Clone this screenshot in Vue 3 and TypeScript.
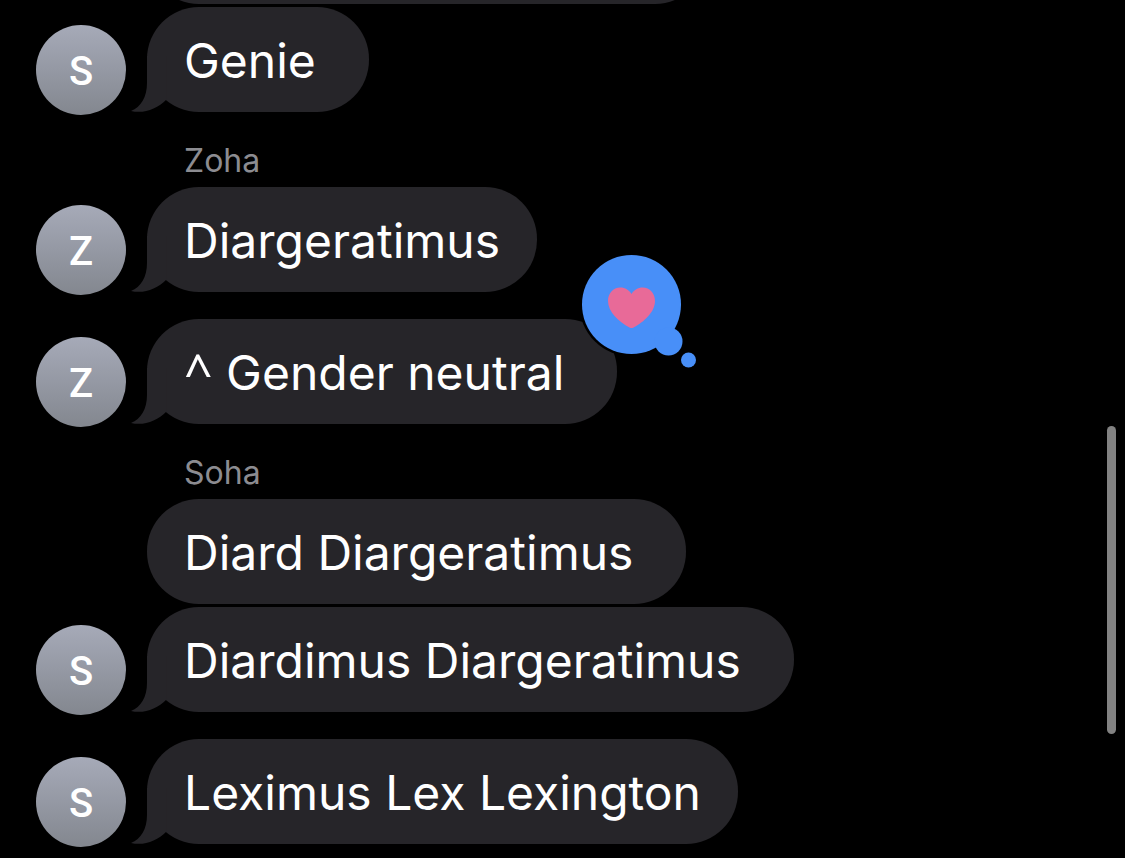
<script setup lang="ts">
interface Message {
  id: number
  text: string
  marker?: string
  initial?: string
  sender?: string
  stacked?: boolean
  roomy?: boolean
  loved?: boolean
}

const messages: Message[] = [
  { id: 1, text: 'Genie', initial: 'S', stacked: true, roomy: true },
  { id: 2, text: 'Diargeratimus', initial: 'Z', sender: 'Zoha' },
  { id: 3, marker: '^', text: ' Gender neutral', initial: 'Z', roomy: true, loved: true },
  { id: 4, text: 'Diard Diargeratimus', sender: 'Soha', roomy: true },
  { id: 5, text: 'Diardimus Diargeratimus', initial: 'S', stacked: true, roomy: true },
  { id: 6, text: 'Leximus Lex Lexington', initial: 'S' },
]
</script>

<template>
  <main class="conversation">
    <div class="earlier" aria-hidden="true"></div>
    <section
      v-for="m in messages"
      :key="m.id"
      class="message"
      :class="{ stacked: m.stacked, named: m.sender }"
    >
      <h2 v-if="m.sender" class="sender">{{ m.sender }}</h2>
      <div class="row">
        <div class="gutter">
          <span v-if="m.initial" class="avatar">{{ m.initial }}</span>
        </div>
        <div class="bubble" :class="{ roomy: m.roomy }">
          <svg v-if="m.initial" class="tail" viewBox="0 0 36 56" aria-hidden="true">
            <path d="M16 0V27C16 41 10 51 0 55C13 58 26 53 35.500 43.500V0Z" />
          </svg>
          <p class="text"><span v-if="m.marker" class="marker">{{ m.marker }}</span>{{ m.text }}</p>
          <svg v-if="m.loved" class="reaction" viewBox="0 0 120 118" role="img" aria-label="Loved">
            <circle class="ring" cx="52.5" cy="52.5" r="52" />
            <g class="cloud">
              <circle cx="52.5" cy="52.5" r="49.5" />
              <circle cx="89.5" cy="89.5" r="14" />
              <circle cx="109.5" cy="108" r="7.5" />
            </g>
            <path
              class="heart"
              d="M52.500 42C50 38 46 35.500 41.500 35.500C34 35.500 29 41.500 29 49C29 60 40 70 50.500 75.500Q52.500 76.700 54.500 75.500C65 70 76 60 76 49C76 41.500 71 35.500 63.500 35.500C59 35.500 55 38 52.500 42Z"
            />
          </svg>
        </div>
      </div>
    </section>
    <div class="scroll-thumb" aria-hidden="true"></div>
  </main>
</template>

<style>
html,
body {
  background: #000;
}
</style>

<style scoped>
.conversation {
  position: relative;
  box-sizing: border-box;
  height: 100vh;
  padding: 0 36px 14px;
  overflow: hidden;
  display: flex;
  flex-direction: column;
  justify-content: flex-end;
  background: #000;
  color: #fff;
  font-family: Inter, "Liberation Sans", sans-serif;
}

.earlier {
  flex: none;
  width: 560px;
  height: 105px;
  margin-left: 111px;
  border-radius: 52px;
  background: #262529;
}

.message {
  flex: none;
  margin-top: 27px;
}

.message.stacked {
  margin-top: 3px;
}

.message.named {
  margin-top: 29px;
}

.sender {
  margin: 0 0 6px 148px;
  color: #8c8c91;
  font-size: 32px;
  font-weight: 400;
  line-height: 40px;
}

.row {
  display: flex;
  align-items: flex-end;
}

.gutter {
  flex: none;
  width: 111px;
}

.avatar {
  box-sizing: border-box;
  display: flex;
  align-items: center;
  justify-content: center;
  width: 90px;
  height: 90px;
  margin-bottom: -3px;
  padding-top: 4px;
  border-radius: 50%;
  background: linear-gradient(#a6aab8, #83878f);
  font-family: Roboto, "Liberation Sans", sans-serif;
  font-size: 40px;
  font-weight: 500;
  line-height: 48px;
}

.bubble {
  position: relative;
  box-sizing: border-box;
  height: 105px;
  padding: 24px 37px 21px;
  border-radius: 52px;
  background: #262529;
}

.bubble.roomy {
  padding-right: 53px;
}

.text {
  margin: 0;
  font-size: 48px;
  line-height: 60px;
  white-space: pre;
}

.marker {
  font-family: "Noto Sans", sans-serif;
  font-size: 50px;
  line-height: 0;
}

.tail {
  position: absolute;
  left: -16px;
  bottom: 0;
  width: 36px;
  height: 56px;
  fill: #262529;
}

.reaction {
  position: absolute;
  top: -67px;
  right: -82px;
  width: 120px;
  height: 118px;
}

.ring {
  fill: #000;
}

.cloud {
  fill: #488ff8;
}

.heart {
  fill: #e86a98;
}

.scroll-thumb {
  position: absolute;
  top: 49.7%;
  right: 9px;
  width: 9px;
  height: 35.9%;
  border-radius: 5px;
  background: #828282;
}
</style>
